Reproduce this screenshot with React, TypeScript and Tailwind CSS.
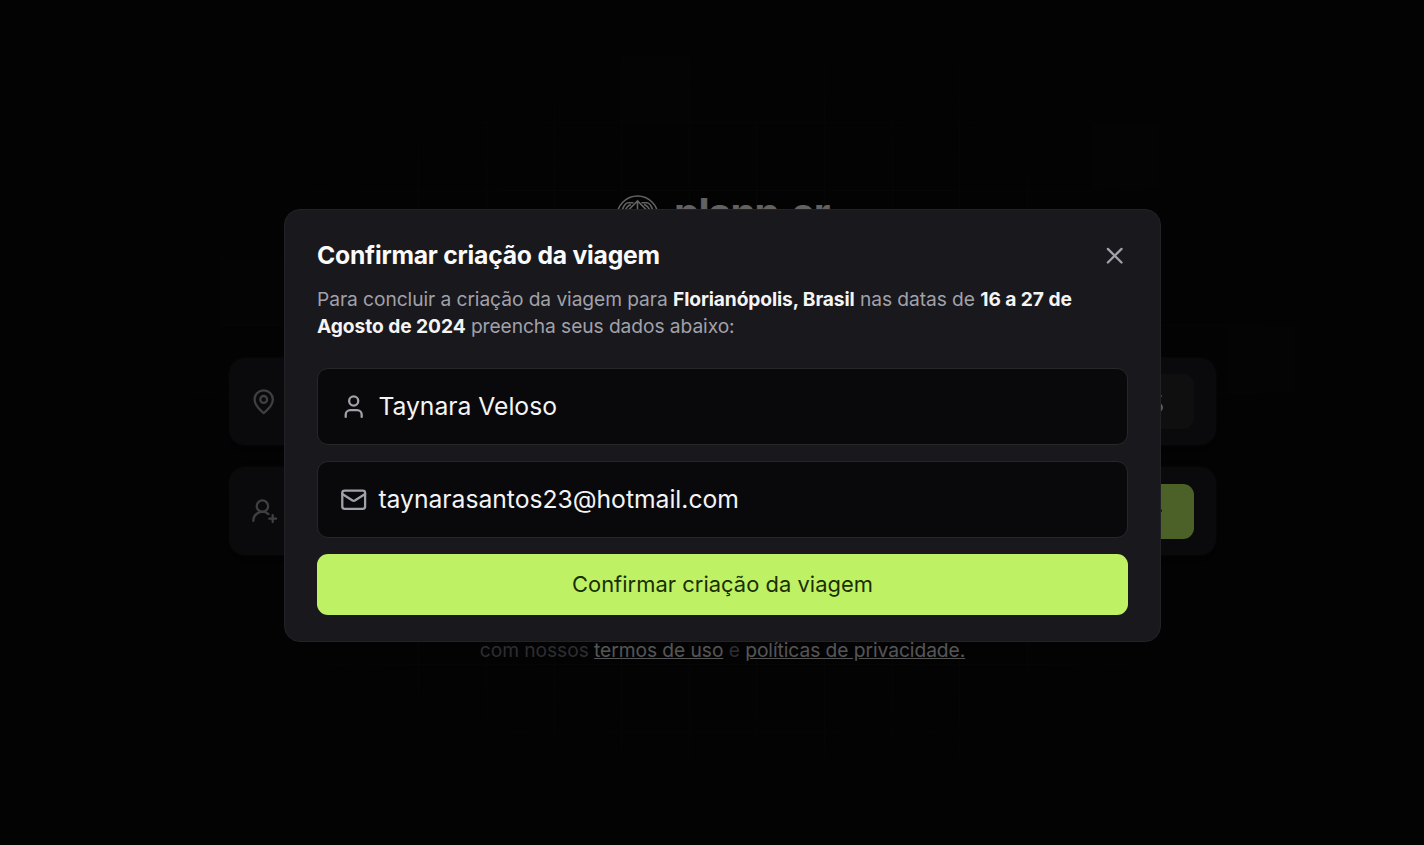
import React from "react";
import { ArrowRight, Mail, Settings2, User, UserRoundPlus, X } from "lucide-react";

const columns = [418, 486, 554, 621, 689, 756, 824, 892, 959, 1027];
const rows = [122, 190, 325, 393, 664, 732];
const tiles = [
  [622, 55],
  [1092, 122],
  [220, 258],
  [1228, 326],
];

function Backdrop() {
  return (
    <svg className="absolute inset-0" width="1424" height="845" aria-hidden="true">
      <defs>
        <radialGradient id="fade" cx="0.51" cy="0.5" r="0.5">
          <stop offset="0.3" stopColor="#27272a" stopOpacity="0.45" />
          <stop offset="1" stopColor="#27272a" stopOpacity="0" />
        </radialGradient>
        <mask id="lines">
          {columns.map((x) => (
            <rect key={x} x={x} y="60" width="1" height="700" fill="#fff" />
          ))}
          {rows.map((y) => (
            <rect key={y} x="180" y={y} width="1080" height="1" fill="#ccc" />
          ))}
        </mask>
      </defs>
      <rect width="1424" height="845" fill="url(#fade)" mask="url(#lines)" />
      {tiles.map(([x, y]) => (
        <rect key={x} x={x} y={y} width="67" height="67" fill="#0a0a0e" />
      ))}
    </svg>
  );
}

function MapPinIcon() {
  return (
    <svg
      className="-ml-px"
      width="27.4"
      height="27.4"
      viewBox="0 0 24 24"
      fill="none"
      stroke="currentColor"
      strokeWidth="2"
      strokeLinecap="round"
      strokeLinejoin="round"
    >
      <path d="M20 10c0 6-8 12-8 12s-8-6-8-12a8 8 0 0 1 16 0Z" />
      <circle cx="12" cy="10" r="3" />
    </svg>
  );
}

function Logo() {
  return (
    <div className="flex h-[46px] items-start text-zinc-100">
      <svg
        className="mt-px"
        width="44"
        height="44"
        viewBox="0 0 44 44"
        fill="none"
        stroke="currentColor"
        strokeWidth="1.6"
      >
        <circle cx="21.500" cy="21.500" r="20.5" />
        <path d="M21.500 6v31M12 15.500L21.500 6l9.500 9.500" />
        <path d="M17.500 7.800h-5.500c-2 0-5 3-6 9M25.500 7.800h5.500c2 0 5 3 6 9" />
        <path d="M15 9.500c-3 1-5 3-6 7M28 9.500c3 1 5 3 6 7" />
      </svg>
      <span className="-mt-[4px] ml-3.5 text-[41px] leading-[46px] font-bold tracking-[-1.45px]">plann.er</span>
    </div>
  );
}

function Row({ icon, children }: { icon: React.ReactNode; children: React.ReactNode }) {
  return (
    <div className="flex h-[87px] items-center justify-between rounded-2xl bg-[#19181c] px-[22px] text-zinc-400 shadow-[0_0_0_1px_rgba(255,255,255,0.03),0_6px_12px_rgba(0,0,0,0.3)] last:h-[88px]">
      {icon}
      {children}
    </div>
  );
}

function Field({ icon, value }: { icon: React.ReactNode; value: string }) {
  return (
    <div className="flex h-[77px] items-center gap-[11px] rounded-[11px] border border-[#27272a] bg-[#09090b] px-[22px] text-[#a1a1aa]">
      {icon}
      <span className="text-[24.7px] leading-[38px] tracking-[-0.02px] text-[#f4f4f5]">{value}</span>
    </div>
  );
}

export default function App() {
  return (
    <div className="relative h-[845px] w-full overflow-hidden bg-[#09090b] font-['Inter',sans-serif] antialiased">
      <Backdrop />
      <div className="relative flex flex-col items-center pt-[194px] pl-[21px]">
        <Logo />
        <div className="mt-[118px] flex w-[987px] flex-col gap-[22px]">
          <Row icon={<MapPinIcon />}>
            <button className="flex h-[55px] w-[220px] items-center justify-end rounded-[11px] bg-[#27272a] px-[27.5px] text-zinc-200">
              <Settings2 size={27.4} />
            </button>
          </Row>
          <Row icon={<UserRoundPlus size={27.4} />}>
            <button className="flex h-[55px] w-[220px] items-center justify-end rounded-[11px] bg-[#bef264] px-[28px] text-[#1a2e05]">
              <ArrowRight size={27.4} />
            </button>
          </Row>
        </div>
        <p className="mt-[82px] text-[19.2px] leading-[27px] tracking-[-0.05px] text-[#71717a]">
          com nossos <a className="text-[#d4d4d8] underline">termos de uso</a> e{" "}
          <a className="text-[#d4d4d8] underline">políticas de privacidade.</a>
        </p>
      </div>

      <div className="absolute inset-0 flex justify-center bg-black/60 pt-[209px] pl-[21px]">
        <div className="flex h-[433px] w-[877px] flex-col rounded-2xl border border-[#232327] bg-[#19181c] px-8 pt-[26px]">
          <div className="flex items-center justify-between">
            <h2 className="text-[24.7px] leading-[38px] font-[650] tracking-[-0.22px] text-[#fafafa]">
              Confirmar criação da viagem
            </h2>
            <X size={27.4} className="mt-0.5 text-[#a1a1aa]" />
          </div>
          <p className="mt-3 text-[19.2px] leading-[27.4px] tracking-[-0.07px] text-[#a1a1aa]">
            Para concluir a criação da viagem para{" "}
            <strong className="font-[650] tracking-[-0.12px] text-[#f4f4f5]">Florianópolis, Brasil</strong> nas datas de{" "}
            <strong className="font-[650] text-[#f4f4f5]">16 a 27 de Agosto de 2024</strong> preencha seus dados
            abaixo:
          </p>
          <div className="mt-[27px] flex flex-col gap-4">
            <Field icon={<User size={27.4} />} value="Taynara Veloso" />
            <Field icon={<Mail size={27.4} />} value="taynarasantos23@hotmail.com" />
            <button className="h-[61px] rounded-[11px] bg-[#bef264] text-[21.9px] tracking-[0.04px] text-[#1a2e05]">
              Confirmar criação da viagem
            </button>
          </div>
        </div>
      </div>
    </div>
  );
}
